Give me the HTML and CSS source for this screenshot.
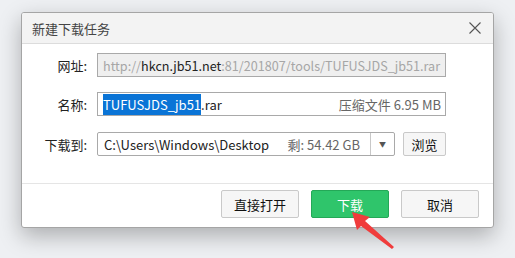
FILE: index.html
```html
<!DOCTYPE html>
<html lang="zh-CN">
<head>
    <meta charset="UTF-8">
    <title>新建下载任务</title>
    <link rel="stylesheet" href="styles.css">
</head>
<body>
    <div class="dialog">
        <div class="titlebar">
            <span class="title">新建下载任务</span>
            <svg class="close" width="12" height="12" viewBox="0 0 12 12">
                <path d="M0.5 0.5 L11.5 11.5 M11.5 0.5 L0.5 11.5" stroke="#555" stroke-width="1.1" fill="none"/>
            </svg>
        </div>

        <div class="form">
            <div class="row">
                <label>网址:</label>
                <div class="field disabled">
                    <span class="dim">http://</span><span class="host">hkcn.jb51.net</span><span class="dim">:81/201807/tools/TUFUSJDS_jb51.rar</span>
                </div>
            </div>
            <div class="row">
                <label>名称:</label>
                <div class="field">
                    <span><span class="sel">TUFUSJDS_jb51</span>.rar</span>
                    <span class="meta">压缩文件 6.95 MB</span>
                </div>
            </div>
            <div class="row">
                <label>下载到:</label>
                <div class="combo">
                    <span class="path">C:\Users\Windows\Desktop</span>
                    <span class="free">剩: 54.42 GB</span>
                    <span class="drop">&#9660;</span>
                </div>
                <button class="btn small">浏览</button>
            </div>
        </div>

        <div class="footer">
            <button class="btn">直接打开</button>
            <button class="btn primary">下载</button>
            <button class="btn">取消</button>
        </div>
    </div>

    <!-- red pointer arrow -->
    <svg class="arrow" width="50" height="44" viewBox="0 0 50 44">
        <path d="M1 1 L19 6 L14 10 L43 36 L41 38 L10 15 L6 19 Z" fill="#f03c3c"/>
    </svg>
</body>
</html>
```

FILE: styles.css
```css
* { box-sizing: border-box; }
body {
    margin: 0;
    padding: 12px 0 0 21px;
    width: 515px;
    height: 258px;
    overflow: hidden;
    background: #eef0f3;
    font-family: "Noto Sans CJK SC", sans-serif;
    font-size: 13px;
    color: #222;
    position: relative;
}
.dialog {
    width: 473px;
    height: 216px;
    background: #fff;
    border: 1px solid #a5a5a5;
    border-radius: 3px;
    box-shadow: 0 8px 22px rgba(0, 0, 0, 0.28);
    overflow: hidden;
}
.titlebar {
    height: 31px;
    background: #f3f3f3;
    border-bottom: 1px solid #dcdcdc;
    display: flex;
    align-items: center;
    justify-content: space-between;
    padding: 0 12px 0 10px;
}
.title { color: #444; font-size: 13px; }
.form { padding: 9px 0 0 0; }
.row {
    display: flex;
    align-items: center;
    height: 24px;
    margin-bottom: 15px;
}
.row:nth-child(2) { margin-bottom: 16px; }
.row:last-child { margin-bottom: 0; }
.row label {
    width: 65px;
    text-align: right;
    margin-right: 10px;
    color: #222;
}
.field {
    width: 349px;
    height: 24px;
    border: 1px solid #a9a9a9;
    display: flex;
    align-items: center;
    justify-content: space-between;
    padding: 0 4px 0 5px;
    white-space: nowrap;
    overflow: hidden;
}
.field.disabled { background: #efefef; justify-content: flex-start; font-size: 12.6px; }
.dim { color: #a6a6a6; }
.host { color: #222; }
.sel { background: #0a74d6; color: #fff; padding: 1px 0; }
.meta { color: #666; }
.combo {
    width: 298px;
    height: 24px;
    border: 1px solid #a9a9a9;
    border-radius: 2px;
    display: flex;
    align-items: center;
    padding-left: 6px;
    white-space: nowrap;
}
.path { flex: 1; }
.free { color: #666; margin-right: 10px; }
.drop {
    width: 24px;
    height: 100%;
    border-left: 1px solid #c8c8c8;
    display: flex;
    align-items: center;
    justify-content: center;
    font-size: 7px;
    color: #555;
}
.btn {
    font-family: inherit;
    font-size: 13px;
    width: 78px;
    height: 28px;
    border: 1px solid #c9c9c9;
    border-radius: 2px;
    background: #f6f6f6;
    color: #111;
}
.btn.small { width: 43px; height: 24px; margin-left: 8px; }
.btn.primary { background: #2fc56b; border-color: #24a857; color: #fff; }
.footer {
    border-top: 1px solid #e5e5e5;
    margin-top: 27px;
    padding: 6px 14px 0 0;
    display: flex;
    justify-content: flex-end;
    gap: 12px;
}
.arrow {
    position: absolute;
    left: 351px;
    top: 211px;
}
```
